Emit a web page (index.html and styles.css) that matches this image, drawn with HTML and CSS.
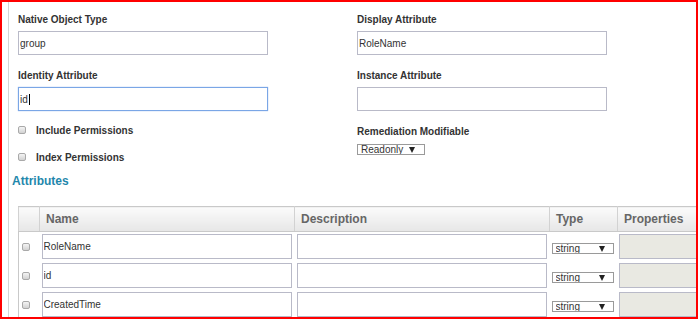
FILE: index.html
```html
<!DOCTYPE html>
<html lang="en">
<head>
  <meta charset="UTF-8" />
  <title>Object Type Attributes</title>
  <link rel="stylesheet" href="styles.css">
</head>
<body>
  <div class="frame">
    <div class="panel">

      <div class="form-grid">
        <div class="field">
          <label>Native Object Type</label>
          <input type="text" class="text-input" value="group" />
        </div>
        <div class="field">
          <label>Display Attribute</label>
          <input type="text" class="text-input" value="RoleName" />
        </div>

        <div class="field">
          <label>Identity Attribute</label>
          <div class="text-input focused">id<span class="caret"></span></div>
        </div>
        <div class="field">
          <label>Instance Attribute</label>
          <input type="text" class="text-input" value="" />
        </div>

        <div class="checks">
          <label class="check"><input type="checkbox" class="cb" /> Include Permissions</label>
          <label class="check"><input type="checkbox" class="cb" /> Index Permissions</label>
        </div>
        <div class="field">
          <label class="remed-label">Remediation Modifiable</label>
          <span class="select-wrap remed">
            <select><option>Readonly</option></select>
          </span>
        </div>
      </div>

      <h3 class="section-title">Attributes</h3>

      <table class="attr-table">
        <colgroup>
          <col class="c-check" />
          <col class="c-name" />
          <col class="c-desc" />
          <col class="c-type" />
          <col class="c-props" />
        </colgroup>
        <thead>
          <tr>
            <th></th>
            <th>Name</th>
            <th>Description</th>
            <th>Type</th>
            <th>Properties</th>
          </tr>
        </thead>
        <tbody>
          <tr>
            <td class="cb-cell"><input type="checkbox" class="cb" /></td>
            <td><input type="text" class="cell-input" value="RoleName" /></td>
            <td><input type="text" class="cell-input" value="" /></td>
            <td><span class="select-wrap type"><select><option>string</option></select></span></td>
            <td><input type="text" class="cell-input props" value="" disabled /></td>
          </tr>
          <tr>
            <td class="cb-cell"><input type="checkbox" class="cb" /></td>
            <td><input type="text" class="cell-input" value="id" /></td>
            <td><input type="text" class="cell-input" value="" /></td>
            <td><span class="select-wrap type"><select><option>string</option></select></span></td>
            <td><input type="text" class="cell-input props" value="" disabled /></td>
          </tr>
          <tr>
            <td class="cb-cell"><input type="checkbox" class="cb" /></td>
            <td><input type="text" class="cell-input" value="CreatedTime" /></td>
            <td><input type="text" class="cell-input" value="" /></td>
            <td><span class="select-wrap type"><select><option>string</option></select></span></td>
            <td><input type="text" class="cell-input props" value="" disabled /></td>
          </tr>
        </tbody>
      </table>

    </div>
  </div>
</body>
</html>
```

FILE: styles.css
```css
/* Reset */
* {
  margin: 0; padding: 0; box-sizing: border-box;
  font-family: 'Liberation Sans', Arial, sans-serif;
}

body {
  background: #fff;
  color: #333;
}

/* Outer frame */
.frame {
  width: 698px;
  height: 319px;
  border: 2px solid #f00;
  overflow: hidden;
}
.panel {
  height: 100%;
  margin-left: 6px;
  border-left: 1px solid #d4d4d4;
  padding: 12px 0 0 3px;
}

/* Form */
.form-grid {
  display: grid;
  grid-template-columns: 339px 1fr;
  row-gap: 15px;
  margin-left: 6px;
}
.field {
  display: flex;
  flex-direction: column;
  align-items: flex-start;
}
.field label {
  font-size: 10px;
  font-weight: 700;
  line-height: 12px;
  color: #333;
  margin-bottom: 5px;
}
.field .remed-label {
  margin-bottom: 6px;
}
.text-input {
  width: 250px;
  height: 24px;
  border: 1px solid #b9bac8;
  padding: 0 1px;
  font-size: 10px;
  color: #333;
  outline: none;
  background: #fff;
}
.text-input.focused {
  display: flex;
  align-items: center;
  border-color: #7aa6e6;
  box-shadow: 0 0 1px #8fb4ec;
}
.caret {
  display: inline-block;
  width: 1px;
  height: 11px;
  background: #000;
  margin-left: 1px;
}

/* Checkboxes */
.checks {
  display: flex;
  flex-direction: column;
  gap: 15px;
  margin-top: -1px;
}
.check {
  display: flex;
  align-items: center;
  font-size: 10px;
  font-weight: 700;
  line-height: 12px;
  color: #333;
}
.cb {
  appearance: none;
  -webkit-appearance: none;
  width: 8px;
  height: 8px;
  border: 1px solid #a9a9a9;
  border-radius: 2px;
  background: linear-gradient(#f4f4f4, #d2d2d2);
  margin-right: 10px;
  margin-top: -3px;
}

/* Selects */
.select-wrap {
  position: relative;
  display: inline-block;
}
.select-wrap select {
  appearance: none;
  -webkit-appearance: none;
  display: block;
  height: 11px;
  border: 1px solid #9a9a9a;
  border-radius: 0;
  background: #fff;
  font-size: 10px;
  line-height: 9px;
  color: #333;
  padding: 0 0 0 3px;
  outline: none;
}
.select-wrap::after {
  content: "";
  position: absolute;
  top: 3px;
  width: 0;
  height: 0;
  border-left: 3.5px solid transparent;
  border-right: 3.5px solid transparent;
  border-top: 6px solid #222;
  pointer-events: none;
}
.select-wrap.remed select {
  width: 68px;
}
.select-wrap.remed::after {
  left: 52px;
}
.select-wrap.type select {
  width: 62px;
}
.select-wrap.type::after {
  left: 47px;
}

/* Attributes section */
.section-title {
  font-size: 12px;
  font-weight: 700;
  line-height: 14px;
  color: #1f87ac;
  margin: 10px 0 18px;
}

.attr-table {
  margin-left: 6px;
  width: 689px;
  table-layout: fixed;
  border-collapse: collapse;
  border: 1px solid #c9c9c9;
}
.c-check { width: 21px; }
.c-name { width: 255px; }
.c-desc { width: 255px; }
.c-type { width: 68px; }
.c-props { width: 90px; }

.attr-table thead th {
  height: 25px;
  background: linear-gradient(#fbfbfb, #e6e6e6);
  border: 1px solid #d2d2d2;
  border-top-color: #c9c9c9;
  border-bottom-color: #c9c9c9;
  font-size: 12px;
  font-weight: 700;
  color: #666;
  text-align: left;
  padding: 0 6px;
}
.attr-table tbody td {
  height: 29px;
  padding: 2px 3px 2px 2px;
  vertical-align: middle;
}
.attr-table tbody td.cb-cell {
  padding: 0 0 0 3px;
}
.attr-table tbody td.cb-cell .cb {
  display: block;
  margin: 0;
}
.cell-input {
  display: block;
  width: 100%;
  height: 25px;
  border: 1px solid #b9bac8;
  padding: 0 1px;
  font-size: 10px;
  color: #333;
  background: #fff;
  outline: none;
}
.cell-input.props {
  background: #e9e9e2;
  margin-left: -1px;
}
```
